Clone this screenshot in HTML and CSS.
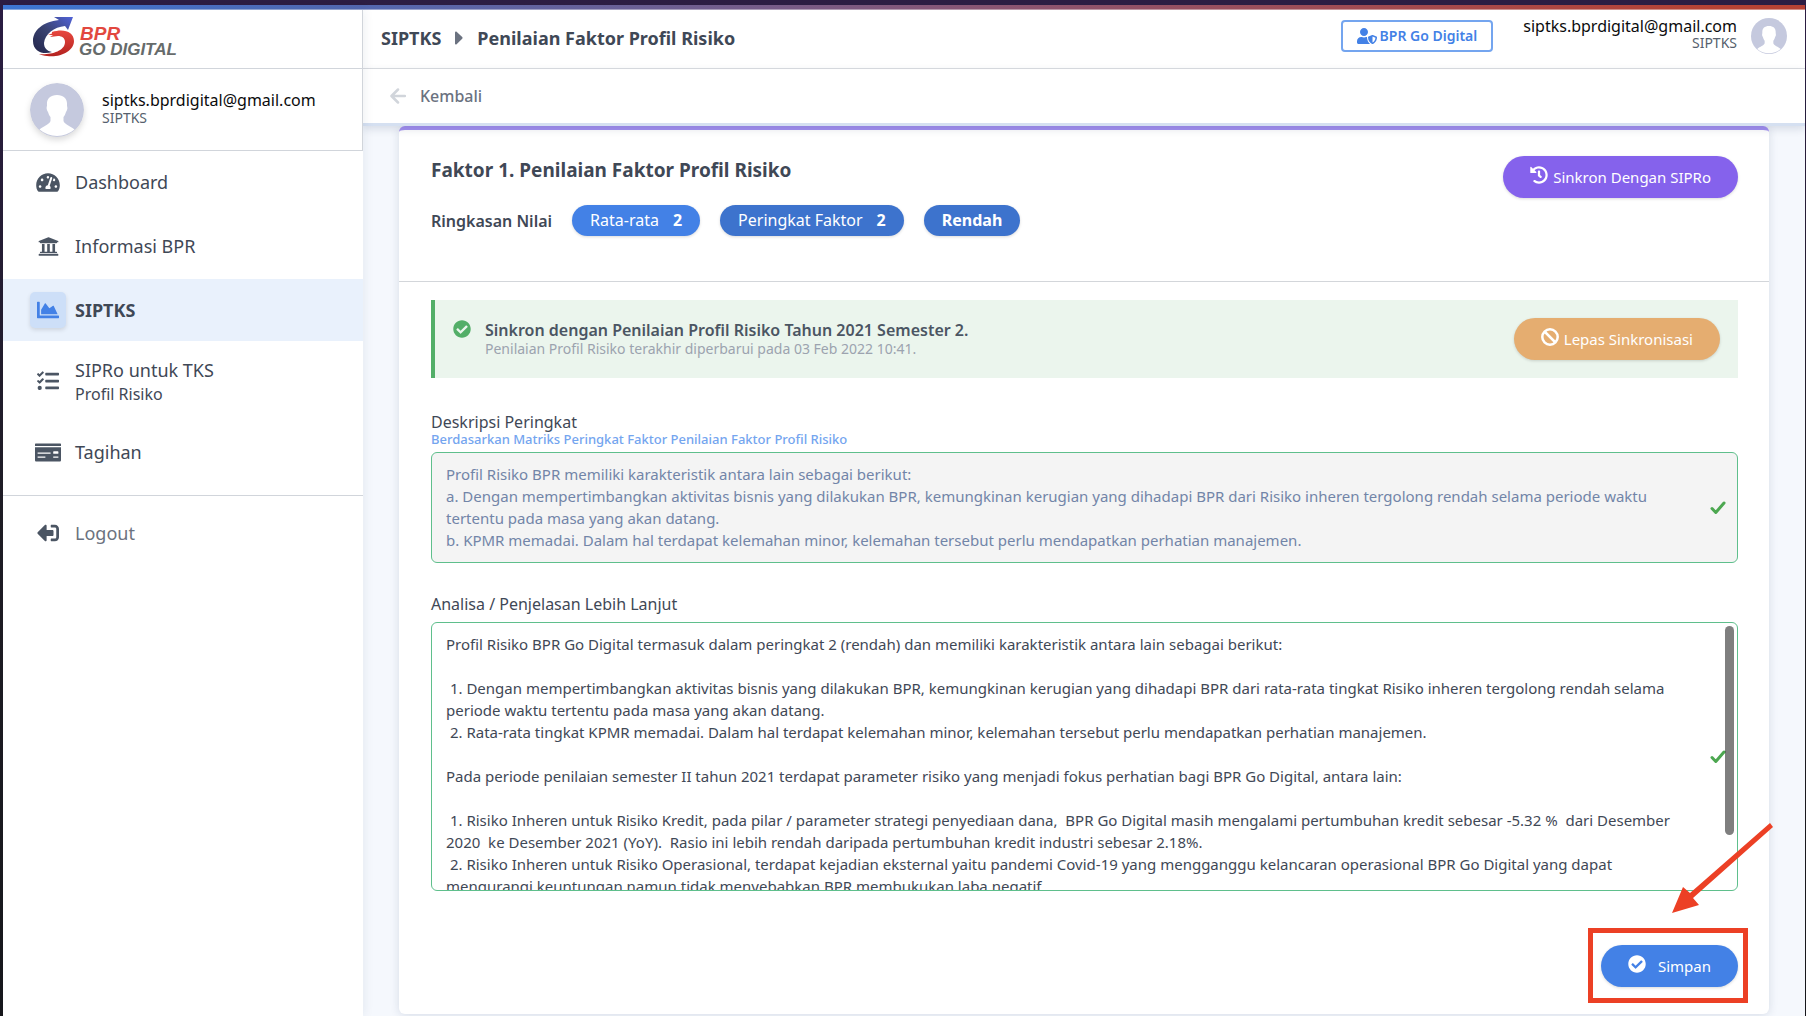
FILE: index.html
```html
<!DOCTYPE html>
<html lang="id">
<head>
<meta charset="utf-8">
<title>SIPTKS - Penilaian Faktor Profil Risiko</title>
<link rel="stylesheet" href="styles.css">
</head>
<body>
<svg width="0" height="0" class="defs" aria-hidden="true">
  <symbol id="avatar" viewBox="0 0 54 54">
    <circle cx="27" cy="27" r="27" fill="#c5c9de"/>
    <path fill="#fff" d="M27 12c-7 0-10.500 4-10 10 .1 1.500-.6 2-.3 4 .3 1.800 1.100 2.200 1.500 3.500.6 2.300 1.500 3.500 2.300 4.500v4c-1 3.500-7 5-11 8.500A27 27 0 0 0 44.500 46.500c-4-3.500-10-5-11-8.500v-4c.8-1 1.700-2.200 2.300-4.500.4-1.300 1.200-1.700 1.500-3.500.3-2-.4-2.500-.3-4 .5-6-3-10-10-10z"/>
  </symbol>
  <symbol id="check-circle" viewBox="0 0 512 512">
    <path d="M504 256c0 136.967-111.033 248-248 248S8 392.967 8 256 119.033 8 256 8s248 111.033 248 248zM227.314 387.314l184-184c6.248-6.248 6.248-16.379 0-22.627l-22.627-22.627c-6.248-6.249-16.379-6.249-22.628 0L216 308.118l-70.059-70.059c-6.248-6.248-16.379-6.248-22.628 0l-22.627 22.627c-6.248 6.248-6.248 16.379 0 22.627l104 104c6.249 6.249 16.379 6.249 22.628.001z"/>
  </symbol>
  <symbol id="tick" viewBox="0 0 16 14">
    <path d="M2 7.500l3.800 4L14 2" fill="none" stroke="#4ca750" stroke-width="3" stroke-linecap="round" stroke-linejoin="round"/>
  </symbol>
</svg>

<div class="rainbow"></div>
<div class="app">
  <aside class="sidebar">
    <a class="logo" href="#" aria-label="BPR Go Digital">
      <svg width="148" height="42" viewBox="0 0 148 42">
        <defs>
          <linearGradient id="navy" x1="0" y1="1" x2="1" y2="0"><stop offset="0" stop-color="#22254a"/><stop offset=".5" stop-color="#3a4372"/><stop offset="1" stop-color="#5163d8"/></linearGradient>
          <linearGradient id="red" x1="0" y1="0" x2="0" y2="1"><stop offset="0" stop-color="#e8483f"/><stop offset="1" stop-color="#b3221f"/></linearGradient>
        </defs>
        <path fill="url(#navy)" d="M22 1h19l-5 13-3-4C22 11 13 18 12 27c0 5 3 8 8 9-8 3-19 0-19-11C1 14 11 6 27 4z"/>
        <path fill="url(#red)" d="M20 16c12-4 22 0 22 9 0 10-14 17-27 15-3-.4-6-1-8-2 10 1 26-2 26-12 0-4-3-6-7-6l-8 1 3-2-5 0 4-1.500z"/>
        <text class="logo-bpr" x="48" y="24">BPR</text>
        <text class="logo-name" x="47" y="39">GO DIGITAL</text>
      </svg>
    </a>
    <div class="profile">
      <svg class="profile-avatar" width="54" height="54"><use href="#avatar"/></svg>
      <div>
        <div class="email">siptks.bprdigital@gmail.com</div>
        <div class="role">SIPTKS</div>
      </div>
    </div>
    <nav class="menu">
      <a class="item" href="#"><span class="icon"><svg width="24" height="21" viewBox="0 0 576 512"><path d="M288 32C128.940 32 0 160.940 0 320c0 52.800 14.250 102.260 39.060 144.800 5.610 9.620 16.300 15.200 27.440 15.200h443c11.140 0 21.830-5.580 27.440-15.200C561.750 422.260 576 372.800 576 320c0-159.060-128.940-288-288-288zm0 64c14.710 0 26.580 10.130 30.320 23.650-1.110 2.260-2.640 4.230-3.450 6.670l-9.220 27.670c-5.130 3.490-10.970 6.010-17.640 6.010-17.670 0-32-14.330-32-32S270.330 96 288 96zM96 384c-17.670 0-32-14.330-32-32s14.330-32 32-32 32 14.330 32 32-14.330 32-32 32zm48-160c-17.670 0-32-14.330-32-32s14.330-32 32-32 32 14.330 32 32-14.330 32-32 32zm246.770-72.410l-61.330 184C343.130 347.330 352 364.540 352 384c0 11.720-3.380 22.550-8.880 32H232.880c-5.500-9.450-8.880-20.280-8.880-32 0-33.940 26.500-61.430 59.900-63.590l61.340-184.010c4.170-12.560 17.730-19.450 30.360-15.170 12.570 4.190 19.350 17.790 15.170 30.360zm14.660 57.200l15.520-46.550c3.470-1.290 7.130-2.230 11.050-2.230 17.670 0 32 14.330 32 32s-14.330 32-32 32c-11.380-.01-20.890-6.280-26.570-15.220zM480 384c-17.670 0-32-14.330-32-32s14.330-32 32-32 32 14.330 32 32-14.330 32-32 32z"/></svg></span><span>Dashboard</span></a>
      <a class="item" href="#"><span class="icon"><svg width="21" height="21" viewBox="0 0 512 512"><path d="M496 128v16a8 8 0 0 1-8 8h-24v12c0 6.627-5.373 12-12 12H60c-6.627 0-12-5.373-12-12v-12H24a8 8 0 0 1-8-8v-16a8 8 0 0 1 4.941-7.392l232-88a7.996 7.996 0 0 1 6.118 0l232 88A8 8 0 0 1 496 128zm-24 304H40c-13.255 0-24 10.745-24 24v16a8 8 0 0 0 8 8h464a8 8 0 0 0 8-8v-16c0-13.255-10.745-24-24-24zM96 192v192H60c-6.627 0-12 5.373-12 12v20h416v-20c0-6.627-5.373-12-12-12h-36V192h-64v192h-64V192h-64v192h-64V192H96z"/></svg></span><span>Informasi BPR</span></a>
      <a class="item active" href="#" aria-current="page"><span class="icon"><svg width="22" height="22" viewBox="0 0 512 512"><path d="M500 384c6.600 0 12 5.400 12 12v40c0 6.600-5.400 12-12 12H12c-6.600 0-12-5.400-12-12V76c0-6.600 5.400-12 12-12h40c6.600 0 12 5.400 12 12v308h436zM372.700 159.500L288 216l-85.300-113.700c-5.100-6.800-15.500-6.300-19.900 1L96 248v104h384l-89.900-187.800c-3.200-6.500-11.400-8.700-17.400-4.700z"/></svg></span><span>SIPTKS</span></a>
      <a class="item tall" href="#"><span class="icon"><svg width="22" height="22" viewBox="0 0 512 512"><path d="M139.610 35.500a12 12 0 0 0-17 0L58.930 98.810l-22.700-22.120a12 12 0 0 0-17 0L3.530 92.410a12 12 0 0 0 0 17l47.590 47.400a12.780 12.780 0 0 0 17.610 0l15.590-15.620L156.520 69a12.090 12.090 0 0 0 .09-17zm0 159.190a12 12 0 0 0-17 0l-63.680 63.720-22.700-22.100a12 12 0 0 0-17 0L3.530 252a12 12 0 0 0 0 17L51 316.500a12.770 12.770 0 0 0 17.600 0l15.700-15.690 72.200-72.220a12 12 0 0 0 .09-16.900zM64 368c-26.490 0-48.590 21.500-48.590 48S37.530 464 64 464a48 48 0 0 0 0-96zm432 16H208a16 16 0 0 0-16 16v32a16 16 0 0 0 16 16h288a16 16 0 0 0 16-16v-32a16 16 0 0 0-16-16zm0-320H208a16 16 0 0 0-16 16v32a16 16 0 0 0 16 16h288a16 16 0 0 0 16-16V80a16 16 0 0 0-16-16zm0 160H208a16 16 0 0 0-16 16v32a16 16 0 0 0 16 16h288a16 16 0 0 0 16-16v-32a16 16 0 0 0-16-16z"/></svg></span><span>SIPRo untuk TKS<small>Profil Risiko</small></span></a>
      <a class="item" href="#"><span class="icon"><svg width="26" height="21" viewBox="0 0 640 512"><path d="M0 448c0 17.670 14.330 32 32 32h576c17.670 0 32-14.330 32-32V128H0v320zm448-208c0-8.840 7.160-16 16-16h96c8.840 0 16 7.160 16 16v32c0 8.840-7.160 16-16 16h-96c-8.840 0-16-7.160-16-16v-32zm0 120c0-4.420 3.580-8 8-8h112c4.420 0 8 3.580 8 8v16c0 4.420-3.580 8-8 8H456c-4.420 0-8-3.580-8-8v-16zM64 264c0-4.420 3.580-8 8-8h304c4.420 0 8 3.580 8 8v16c0 4.420-3.580 8-8 8H72c-4.420 0-8-3.580-8-8v-16zm0 96c0-4.420 3.580-8 8-8h176c4.420 0 8 3.580 8 8v16c0 4.420-3.580 8-8 8H72c-4.420 0-8-3.580-8-8v-16zM624 32H16C7.160 32 0 39.160 0 48v48h640V48c0-8.840-7.160-16-16-16z"/></svg></span><span>Tagihan</span></a>
    </nav>
    <div class="menu-end">
      <a class="item muted" href="#"><span class="icon"><svg width="22" height="22" viewBox="0 0 512 512"><path transform="translate(512 0) scale(-1 1)" d="M497 273L329 441c-15 15-41 4.500-41-17v-96H152c-13.300 0-24-10.700-24-24v-96c0-13.300 10.700-24 24-24h136V88c0-21.400 25.900-32 41-17l168 168c9.300 9.400 9.300 24.600 0 34zM192 436v-40c0-6.600-5.400-12-12-12H96c-17.700 0-32-14.300-32-32V160c0-17.700 14.300-32 32-32h84c6.600 0 12-5.400 12-12V76c0-6.600-5.400-12-12-12H96c-53 0-96 43-96 96v192c0 53 43 96 96 96h84c6.600 0 12-5.400 12-12z"/></svg></span><span>Logout</span></a>
    </div>
  </aside>

  <div class="content">
    <header class="topbar">
      <div class="crumbs">
        <span>SIPTKS</span>
        <svg width="8" height="14" viewBox="0 0 8 14"><path fill="#6b7280" d="M0 1.500C0 .5 1 .2 1.600.8l5.600 5.300c.5.500.5 1.200 0 1.700l-5.600 5.400c-.6.600-1.600.2-1.600-.8z"/></svg>
        <span>Penilaian Faktor Profil Risiko</span>
      </div>
      <button class="org" type="button"><svg width="20" height="16" viewBox="0 0 640 512"><path d="M622.300 271.100l-115.200-45c-4.100-1.600-12.600-3.700-22.200 0l-115.200 45c-10.700 4.200-17.700 14-17.700 24.900 0 111.600 68.700 188.800 132.900 213.900 9.600 3.700 18 1.600 22.200 0C558.400 489.900 640 420.500 640 296c0-10.900-7-20.700-17.700-24.900zM496 462.400V273.300l95.500 37.300c-5.600 87.100-60.900 135.400-95.500 151.800zM224 256c70.700 0 128-57.300 128-128S294.700 0 224 0 96 57.300 96 128s57.300 128 128 128zm96 40c0-2.500.8-4.800 1.100-7.200-2.500-.1-4.900-.8-7.500-.8h-16.700c-22.200 10.200-46.900 16-72.900 16s-50.600-5.800-72.900-16h-16.700C60.200 288 0 348.200 0 422.400V464c0 26.500 21.500 48 48 48h352c6.800 0 13.300-1.500 19.200-4-54-42.900-99.200-116.700-99.200-212z"/></svg>BPR Go Digital</button>
      <div class="account">
        <div class="email">siptks.bprdigital@gmail.com</div>
        <div class="role">SIPTKS</div>
      </div>
      <svg class="account-avatar" width="36" height="36"><use href="#avatar"/></svg>
    </header>
    <div class="backbar">
      <a class="back" href="#"><svg width="16" height="16" viewBox="0 0 16 16"><path d="M8 1.500L1.500 8 8 14.500M2 8h13" fill="none" stroke="#d1d5db" stroke-width="2.500" stroke-linecap="round" stroke-linejoin="round"/></svg>Kembali</a>
    </div>

    <main class="card">
      <section class="summary">
        <div>
          <h1>Faktor 1. Penilaian Faktor Profil Risiko</h1>
          <div class="scores">
            <span class="scores-label">Ringkasan Nilai</span>
            <span class="pill light">Rata-rata <b>2</b></span>
            <span class="pill">Peringkat Faktor <b>2</b></span>
            <span class="pill"><b>Rendah</b></span>
          </div>
        </div>
        <button class="btn violet" type="button"><svg width="18" height="18" viewBox="0 0 512 512"><path d="M504 255.531c.253 136.640-111.180 248.372-247.820 248.468-59.015.042-113.223-20.530-155.822-54.911-11.077-8.940-11.905-25.541-1.839-35.607l11.267-11.267c8.609-8.609 22.353-9.551 31.891-1.984C173.062 425.135 212.781 440 256 440c101.705 0 184-82.311 184-184 0-101.705-82.311-184-184-184-48.814 0-93.149 18.969-126.068 49.932l50.754 50.754c10.080 10.080 2.941 27.314-11.313 27.314H24c-8.837 0-16-7.163-16-16V38.627c0-14.254 17.234-21.393 27.314-11.314l49.372 49.372C129.209 34.136 189.552 8 256 8c136.810 0 247.747 110.780 248 247.531zm-180.912 78.784l9.823-12.630c8.138-10.463 6.253-25.542-4.210-33.679L288 256.349V152c0-13.255-10.745-24-24-24h-16c-13.255 0-24 10.745-24 24v135.651l65.409 50.874c10.463 8.137 25.541 6.253 33.679-4.210z"/></svg>Sinkron Dengan SIPRo</button>
      </section>

      <form class="form">
        <div class="notice">
          <svg class="notice-icon" width="18" height="18"><use href="#check-circle"/></svg>
          <div class="notice-text">
            <strong>Sinkron dengan Penilaian Profil Risiko Tahun 2021 Semester 2.</strong>
            <span>Penilaian Profil Risiko terakhir diperbarui pada 03 Feb 2022 10:41.</span>
          </div>
          <button class="btn orange" type="button"><svg width="18" height="18" viewBox="0 0 18 18"><path d="M4 4l10 10" stroke="#fff" stroke-width="2.500"/><circle cx="9" cy="9" r="7.700" fill="none" stroke="#fff" stroke-width="2.500"/></svg>Lepas Sinkronisasi</button>
        </div>

        <div class="field">
          <label for="deskripsi">Deskripsi Peringkat</label>
          <a class="hint" href="#">Berdasarkan Matriks Peringkat Faktor Penilaian Faktor Profil Risiko</a>
          <div class="control">
            <textarea id="deskripsi" rows="4" readonly>Profil Risiko BPR memiliki karakteristik antara lain sebagai berikut:
a. Dengan mempertimbangkan aktivitas bisnis yang dilakukan BPR, kemungkinan kerugian yang dihadapi BPR dari Risiko inheren tergolong rendah selama periode waktu tertentu pada masa yang akan datang.
b. KPMR memadai. Dalam hal terdapat kelemahan minor, kelemahan tersebut perlu mendapatkan perhatian manajemen.</textarea>
            <svg class="tick" width="16" height="14"><use href="#tick"/></svg>
          </div>
        </div>

        <div class="field">
          <label for="analisa">Analisa / Penjelasan Lebih Lanjut</label>
          <div class="control">
            <textarea id="analisa" class="long">Profil Risiko BPR Go Digital termasuk dalam peringkat 2 (rendah) dan memiliki karakteristik antara lain sebagai berikut:

 1. Dengan mempertimbangkan aktivitas bisnis yang dilakukan BPR, kemungkinan kerugian yang dihadapi BPR dari rata-rata tingkat Risiko inheren tergolong rendah selama periode waktu tertentu pada masa yang akan datang.
 2. Rata-rata tingkat KPMR memadai. Dalam hal terdapat kelemahan minor, kelemahan tersebut perlu mendapatkan perhatian manajemen.

Pada periode penilaian semester II tahun 2021 terdapat parameter risiko yang menjadi fokus perhatian bagi BPR Go Digital, antara lain:

 1. Risiko Inheren untuk Risiko Kredit, pada pilar / parameter strategi penyediaan dana,  BPR Go Digital masih mengalami pertumbuhan kredit sebesar -5.32 %  dari Desember 2020  ke Desember 2021 (YoY).  Rasio ini lebih rendah daripada pertumbuhan kredit industri sebesar 2.18%.
 2. Risiko Inheren untuk Risiko Operasional, terdapat kejadian eksternal yaitu pandemi Covid-19 yang mengganggu kelancaran operasional BPR Go Digital yang dapat mengurangi keuntungan namun tidak menyebabkan BPR membukukan laba negatif.</textarea>
            <svg class="tick" width="16" height="14"><use href="#tick"/></svg>
            <span class="scroll-thumb"></span>
          </div>
        </div>

        <div class="actions">
          <div class="save">
            <button class="btn blue" type="submit"><svg width="18" height="18"><use href="#check-circle"/></svg>Simpan</button>
            <span class="callout"></span>
            <svg class="callout-arrow" width="102" height="90" viewBox="0 0 102 90"><path fill="#ec4025" d="M99 0l3 4-80 71 6 7-27 8 11-26 7 6z"/></svg>
          </div>
        </div>
      </form>
    </main>
  </div>
</div>
</body>
</html>
```
FILE: styles.css
```css
* {
  box-sizing: border-box;
}

body {
  margin: 0;
  min-height: 100vh;
  display: flex;
  flex-direction: column;
  padding: 5px 1px 0 3px;
  background: linear-gradient(#2c1d43, #1f1c24 50%, #17171b);
  color: #3f4856;
  font: 15px/22px "Noto Sans", "Open Sans", sans-serif;
}

a {
  color: inherit;
  text-decoration: none;
}

svg {
  display: block;
  flex: none;
  fill: currentColor;
}

.defs {
  position: absolute;
}

button {
  font: inherit;
  cursor: pointer;
}

.rainbow {
  height: 5px;
  background: linear-gradient(90deg, #3e78d6, #5468b0 20%, #8a5572 55%, #b74234 95%);
  border-bottom: 1px solid rgba(255, 255, 255, .4);
}

.app {
  flex: 1;
  display: grid;
  grid-template-columns: 360px minmax(0, 1fr);
  background: #f5f8fd;
}

/* Sidebar */
.sidebar {
  position: relative;
  background: #fff;
  box-shadow: 1px 0 10px rgba(30, 50, 90, .08);
  z-index: 3;
}

.logo {
  display: block;
  height: 59px;
  padding: 6px 29px;
  border-right: 1px solid #d1d5db;
  border-bottom: 1px solid #d1d5db;
}

.logo-bpr,
.logo-name {
  font: italic bold 17px "Liberation Sans", sans-serif;
  fill: #666b6b;
}

.logo-bpr {
  font-size: 19px;
  fill: #e2483f;
}

.profile {
  display: flex;
  align-items: center;
  gap: 18px;
  height: 82px;
  padding: 0 27px;
  border-right: 1px solid #d1d5db;
  border-bottom: 1px solid #d1d5db;
}

.profile-avatar {
  border-radius: 50%;
  filter: drop-shadow(0 3px 3px rgba(0, 0, 0, .15));
}

.email {
  color: #0b0b0d;
  font-size: 16px;
  line-height: 18px;
}

.role {
  color: #565f6d;
  font-size: 14px;
  line-height: 18px;
}

.profile .role {
  margin-bottom: 2px;
}

.menu {
  display: grid;
  gap: 2px;
  padding-bottom: 12px;
}

.menu-end {
  border-top: 1px solid #d1d5db;
  padding-top: 6px;
}

.item {
  display: flex;
  align-items: center;
  gap: 9px;
  height: 62px;
  padding: 0 27px;
  font-size: 18px;
  line-height: 26px;
}

.item.tall {
  height: 76px;
}

.item small {
  display: block;
  font-size: 16px;
  line-height: 22px;
}

.item.muted {
  color: #6b7280;
}

.icon {
  display: grid;
  place-items: center;
  width: 36px;
  height: 36px;
  border-radius: 5px;
  color: #4b5563;
}

.item.active {
  background: #e9f1fc;
  font-weight: 700;
}

.item.active .icon {
  background: #cddff8;
  color: #4381e6;
  box-shadow: 0 2px 4px rgba(0, 0, 0, .12);
}

/* Top bars */
.content {
  display: flex;
  flex-direction: column;
}

.topbar {
  display: flex;
  align-items: center;
  height: 59px;
  padding: 0 18px 2px;
  background: #fff;
  border-bottom: 1px solid #dcdee2;
}

.crumbs {
  display: flex;
  align-items: center;
  gap: 14px;
  margin-right: auto;
  font-size: 18px;
  font-weight: 700;
}

.org {
  display: flex;
  align-items: center;
  gap: 3px;
  height: 32px;
  margin: 0 30px 4px 0;
  padding: 0 14px;
  border: 2px solid #74a5ef;
  border-radius: 4px;
  background: #fff;
  color: #4381e6;
  font-size: 14px;
  font-weight: 600;
}

.account {
  margin: 0 14px 8px 0;
  text-align: right;
}

.account .role {
  line-height: 16px;
}

.account-avatar {
  margin-bottom: 4px;
}

.backbar {
  position: relative;
  z-index: 2;
  height: 57px;
  padding: 0 27px;
  background: #fff;
  border-bottom: 3px solid #d5e0f1;
  box-shadow: 0 3px 8px rgba(30, 50, 90, .14);
}

.back {
  display: inline-flex;
  align-items: center;
  gap: 14px;
  height: 54px;
  color: #6b7280;
  font-size: 16px;
  font-weight: 500;
}

/* Card */
.card {
  margin: 0 36px 2px;
  background: #fff;
  border-top: 4px solid #a38ff0;
  border-radius: 6px;
  box-shadow: 0 1px 10px rgba(30, 50, 90, .14);
}

.summary {
  display: flex;
  justify-content: space-between;
  align-items: flex-start;
  padding: 26px 31px 45px 32px;
  border-bottom: 1px solid #d3d6da;
}

h1 {
  margin: 0 0 21px;
  font-size: 19px;
  line-height: 28px;
}

.scores {
  display: flex;
  align-items: center;
  gap: 20px;
}

.scores-label {
  font-size: 16px;
  font-weight: 600;
}

.pill {
  display: flex;
  align-items: center;
  gap: 14px;
  height: 31px;
  padding: 0 18px 2px;
  border-radius: 16px;
  background: #3d73cd;
  color: #fff;
  font-size: 16px;
  box-shadow: 0 1px 3px rgba(0, 0, 0, .15);
}

.pill.light {
  background: #4381e6;
}

.btn {
  display: flex;
  align-items: center;
  gap: 5px;
  height: 42px;
  padding: 0 27px;
  border: 0;
  border-radius: 21px;
  color: #fff;
  box-shadow: 0 1px 3px rgba(0, 0, 0, .15);
}

.btn svg {
  margin-bottom: 4px;
}

.violet {
  background: #8562ec;
}

.orange {
  background: #e5ad70;
}

.blue {
  gap: 12px;
  background: #4381e6;
}

.form {
  padding: 18px 31px 27px 32px;
}

.notice {
  display: flex;
  align-items: center;
  height: 78px;
  margin-bottom: 33px;
  padding: 0 18px;
  border-left: 4px solid #53ae68;
  background: #ebf5ed;
}

.notice-icon {
  margin: 0 14px 20px 0;
  color: #53ae68;
}

.notice-text {
  display: grid;
  margin-right: auto;
}

.notice-text strong {
  color: #4b5563;
  font-size: 16px;
  font-weight: 600;
  line-height: 20px;
}

.notice-text span {
  color: #9ca3af;
  font-size: 14px;
  line-height: 18px;
}

.field {
  display: grid;
  margin-bottom: 30px;
}

.field label {
  font-size: 16px;
}

.hint {
  color: #74a5ef;
  font-size: 13px;
  font-weight: 500;
  line-height: 12px;
}

.control {
  position: relative;
  margin-top: 7px;
}

textarea {
  display: block;
  width: 100%;
  height: 111px;
  padding: 10px 80px 10px 14px;
  border: 1px solid #5fbf8c;
  border-radius: 6px;
  background: #f4f4f4;
  color: #7285a8;
  font: inherit;
  resize: none;
  overflow: hidden;
  outline: 0;
}

textarea.long {
  height: 269px;
  padding-right: 50px;
  background: #fff;
  color: #3f4856;
}

.tick {
  position: absolute;
  right: 12px;
  top: calc(50% - 7px);
}

.scroll-thumb {
  position: absolute;
  top: 4px;
  right: 4px;
  width: 9px;
  height: 209px;
  border-radius: 5px;
  background: rgba(0, 0, 0, .5);
}

.actions {
  display: flex;
  justify-content: flex-end;
  padding-top: 24px;
}

.save {
  position: relative;
}

.callout {
  position: absolute;
  inset: -17px -10px -16px -13px;
  border: 5px solid #ec4025;
  pointer-events: none;
}

.callout-arrow {
  position: absolute;
  right: -35px;
  bottom: 74px;
  pointer-events: none;
}
```
